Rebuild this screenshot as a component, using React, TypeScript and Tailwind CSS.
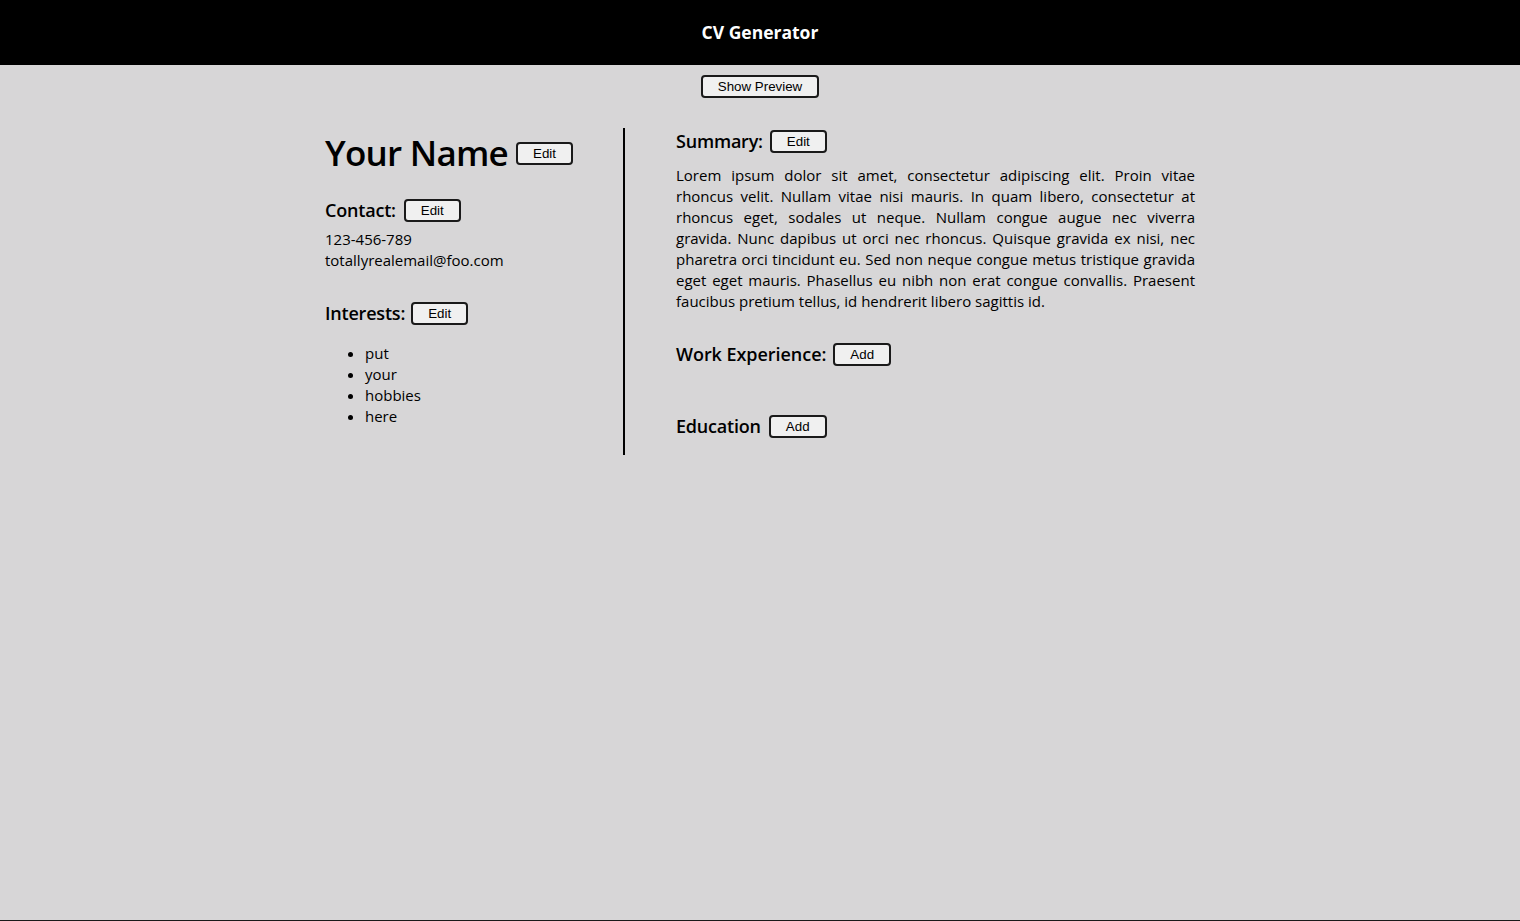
import React from 'react'

const font = { fontFamily: '"Open Sans", "Noto Sans", sans-serif' }

const interests = ['put', 'your', 'hobbies', 'here']

// lines of the summary as they break in the layout
const summaryLines = [
  'Lorem ipsum dolor sit amet, consectetur adipiscing elit. Proin vitae',
  'rhoncus velit. Nullam vitae nisi mauris. In quam libero, consectetur at',
  'rhoncus eget, sodales ut neque. Nullam congue augue nec viverra',
  'gravida. Nunc dapibus ut orci nec rhoncus. Quisque gravida ex nisi, nec',
  'pharetra orci tincidunt eu. Sed non neque congue metus tristique gravida',
  'eget eget mauris. Phasellus eu nibh non erat congue convallis. Praesent',
  'faucibus pretium tellus, id hendrerit libero sagittis id.',
]

const Btn = ({ text }: { text: string }) => (
  <button className="h-[23px] px-[15px] border-2 border-[#1a1a1a] rounded-[4px] bg-[#f0f0f0] text-black text-[13.33px] leading-none font-['Liberation_Sans',Arial,sans-serif]">
    {text}
  </button>
)

const Heading = ({ text }: { text: string }) => (
  <h3 className="text-[18px] font-semibold tracking-[-0.2px]">{text}</h3>
)

const App = () => {
  return (
    <div className="h-[921px] flex flex-col bg-[#d7d6d7] text-black" style={font}>
      <header className="h-[65px] bg-black flex items-center justify-center shrink-0">
        <h1 className="text-white text-[17.5px] font-bold">CV Generator</h1>
      </header>

      <main className="flex-1 flex flex-col items-center border-b border-[#1a1a1a]">
        <div className="mt-[10px] flex">
          <Btn text="Show Preview" />
        </div>

        <div className="mt-[30px] flex w-[870px]">
          {/* left side */}
          <div className="w-[300px] border-r-2 border-black pb-[28px] shrink-0">
            <div className="h-[51px] flex items-center gap-[8px]">
              <h2 className="text-[35px] font-semibold tracking-[-0.75px]">Your Name</h2>
              <Btn text="Edit" />
            </div>

            <div className="mt-[20px] h-[23px] flex items-center gap-[8px]">
              <Heading text="Contact:" />
              <Btn text="Edit" />
            </div>
            <div className="mt-[7px] text-[15px] leading-[21px]">
              <p>123-456-789</p>
              <p>totallyrealemail@foo.com</p>
            </div>

            <div className="mt-[31px] h-[23px] flex items-center gap-[6px]">
              <Heading text="Interests:" />
              <Btn text="Edit" />
            </div>
            <ul className="mt-[18px] pl-[40px] list-disc text-[15px] leading-[21px]">
              {interests.map((item) => (
                <li key={item}>{item}</li>
              ))}
            </ul>
          </div>

          {/* right side */}
          <div className="flex-1 pl-[51px]">
            <div className="mt-[2px] h-[23px] flex items-center gap-[7px]">
              <Heading text="Summary:" />
              <Btn text="Edit" />
            </div>
            <p className="mt-[12px] text-[15px] leading-[21px] text-justify">
              {summaryLines.map((line, i) => (
                <span
                  key={i}
                  className={i < summaryLines.length - 1 ? 'block [text-align-last:justify]' : 'block'}
                >
                  {line}
                </span>
              ))}
            </p>

            <div className="mt-[31px] h-[23px] flex items-center gap-[7px]">
              <h3 className="text-[18px] font-semibold tracking-[-0.05px]">Work Experience:</h3>
              <Btn text="Add" />
            </div>

            <div className="mt-[49px] h-[23px] flex items-center gap-[8px]">
              <Heading text="Education" />
              <Btn text="Add" />
            </div>
          </div>
        </div>
      </main>
    </div>
  )
}

export default App
